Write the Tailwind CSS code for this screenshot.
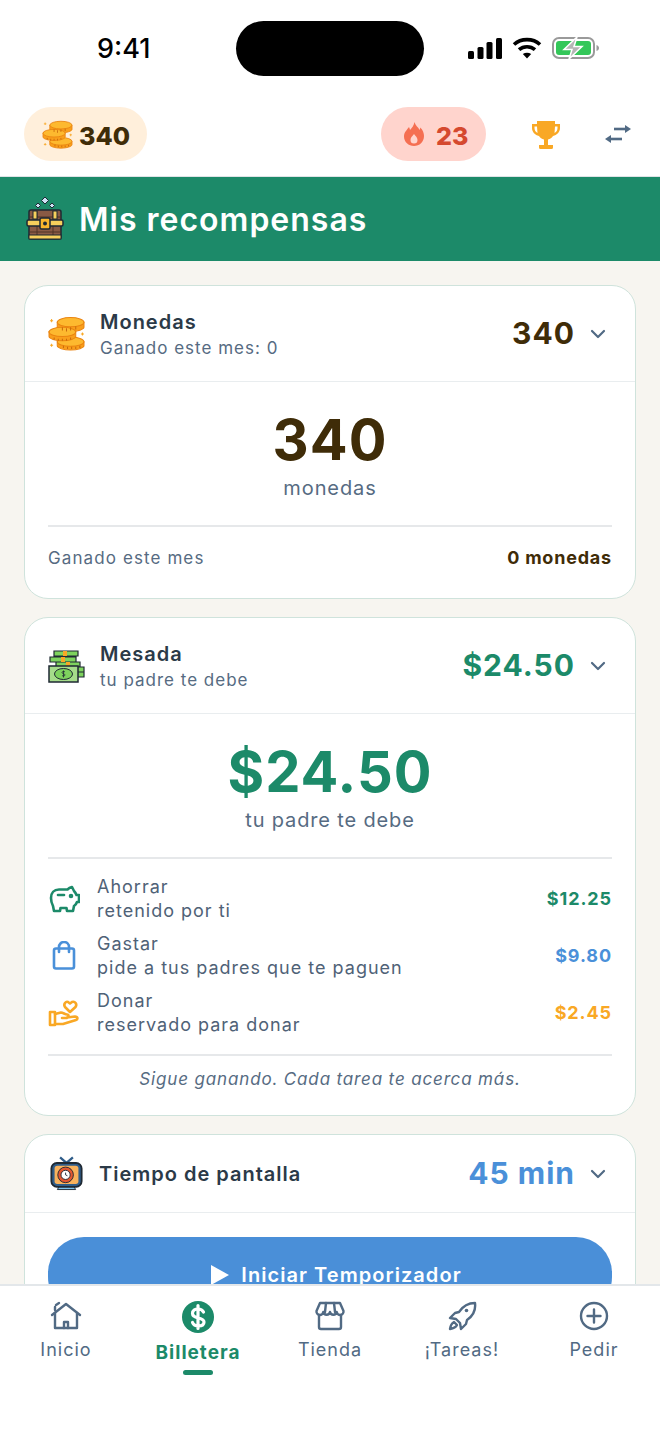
<!DOCTYPE html>
<html lang="es">
<head>
    <meta charset="UTF-8">
    <meta name="viewport" content="width=device-width, initial-scale=1.0">
    <title>Mis recompensas</title>
    <script src="https://cdn.jsdelivr.net/npm/@tailwindcss/browser@4"></script>
</head>
<body class="bg-white font-['Inter',sans-serif]">
    <svg class="hidden">
        <symbol id="coins" viewBox="0 0 36 34">
            <path d="M3 3h1v1h1v1H4v1H3V5H2V4h1zM33 16h1v1h1v1h-1v1h-1v-1h-1v-1h1zM3 27h1v1h1v1H4v1H3v-1H2v-1h1z" fill="#f9a825"/>
            <g stroke="#ea8410" stroke-width="1">
                <path d="M9 25v4c0 2 6 4 13 4s13-2 13-4v-4z" fill="#f99f1b"/>
                <ellipse cx="22" cy="25" rx="13" ry="4.500" fill="#fdb92f"/>
                <path d="M9 6v5c0 2 6 4 13 4s13-2 13-4V6z" fill="#f99f1b"/>
                <ellipse cx="22" cy="6" rx="13" ry="4.500" fill="#fdb92f"/>
                <path d="M1 15v5c0 2 6 4 13 4s13-2 13-4v-5z" fill="#f99f1b"/>
                <ellipse cx="14" cy="15.500" rx="13" ry="4.500" fill="#fdb92f"/>
            </g>
            <path d="M14 11v3M18 12v3M22 11v3M27 10v3M6 21v2M10 22v2M14 22v2M18 22v2M22 21v2M15 29v2M19 30v2M23 30v2M27 30v2M31 29v2" stroke="#c96a0c" stroke-width="1"/>
        </symbol>
    </svg>

    <div class="w-[660px] h-[1434px] flex flex-col overflow-hidden bg-[#f7f5f0]">
        <!-- status bar -->
        <div class="h-[96px] shrink-0 bg-white relative">
            <span class="absolute left-[97px] top-[34px] text-[27px] leading-[30px] font-medium text-black">9:41</span>
            <div class="absolute left-[236px] top-[21px] w-[188px] h-[55px] rounded-full bg-black"></div>
            <svg class="absolute left-[468px] top-[37px]" width="34" height="22" viewBox="0 0 34 22" fill="#000">
                <rect x="0" y="14" width="6" height="8" rx="1.500"/>
                <rect x="9.500" y="10" width="6" height="12" rx="1.500"/>
                <rect x="18.500" y="5" width="6" height="17" rx="1.500"/>
                <rect x="28" y="1" width="6" height="21" rx="1.500"/>
            </svg>
            <svg class="absolute left-[512px] top-[37px]" width="30" height="22" viewBox="0 0 30 22" fill="none" stroke="#000" stroke-width="3.600">
                <path d="M2 7.500c7-6.500 19-6.500 26 0"/>
                <path d="M7 12.700c4.500-4 11.500-4 16 0"/>
                <path d="M15 21.500l-4.200-4.600c2.400-1.600 6-1.600 8.400 0z" fill="#000" stroke="none"/>
            </svg>
            <svg class="absolute left-[552px] top-[36px]" width="48" height="24" viewBox="0 0 48 24">
                <rect x="1" y="2" width="41" height="20" rx="6" fill="none" stroke="#9a9a9a" stroke-width="2"/>
                <rect x="4" y="5" width="35" height="14" rx="3" fill="#34c759"/>
                <path d="M44.500 9c1.500.5 2.500 1.500 2.500 3s-1 2.500-2.500 3z" fill="#9a9a9a"/>
                <path d="M25 1L12 13.500h8L17 23l13-12.500h-8z" fill="#b5b5b5" stroke="#fff" stroke-width="1.500"/>
            </svg>
        </div>

        <!-- top bar -->
        <div class="h-[81px] shrink-0 bg-white border-b border-[#dfe3e6] flex items-start pt-[11px] pl-[24px]">
            <div class="h-[54px] w-[123px] rounded-full bg-[#ffefdb] flex items-center pl-[18px] gap-[6px]">
                <svg width="31" height="29"><use href="#coins"/></svg>
                <span class="mt-[6px] text-[25px] font-extrabold tracking-[0px] text-[#3f2c08]">340</span>
            </div>
            <div class="ml-[234px] h-[54px] w-[105px] rounded-full bg-[#ffd4cd] flex items-center pl-[22px] gap-[11px]">
                <svg width="22" height="26" viewBox="0 0 22 26">
                    <path d="M11.500 1c1 4 4 5 5 8 .5-1 .7-1.500.8-2.500C20 9 21 12.500 21 15c0 6-4.500 10-10 10S1 21 1 15.500C1 11 4 9 6 6c.5 1 .8 2 1 3 2-2 4-5 4.500-8z" fill="#f56f52"/>
                    <path d="M11 13c1.500 2 3.500 3.500 3.500 6a3.500 3.500 0 0 1-7 0c0-2.500 2-4 3.500-6z" fill="#ffd4cd"/>
                </svg>
                <span class="mt-[6px] text-[25px] font-extrabold tracking-[0px] text-[#d5492f]">23</span>
            </div>
            <svg class="ml-[45px] mt-[13px]" width="30" height="30" viewBox="0 0 30 30">
                <path d="M6 1h18v3h5v4c0 4-3 7-7 8-1 2-3 3-5 3.500V25h5v2.500a1.500 1.500 0 0 1-1.500 1.500h-11A1.500 1.500 0 0 1 8 27.500V25h5v-5.500c-2-.5-4-1.500-5-3.500-4-1-7-4-7-8V4h5z" fill="#f9a825"/>
                <path d="M6 6.500H3.500V8c0 2 1 4 3 5zM24 6.500h2.500V8c0 2-1 4-3 5z" fill="#fff"/>
            </svg>
            <svg class="ml-[44px] mt-[18px]" width="26" height="18" viewBox="0 0 26 18" fill="#516a84">
                <rect x="9" y="2.700" width="13" height="2.600"/>
                <path d="M20 0l6 4-6 4z"/>
                <rect x="4" y="12.700" width="13" height="2.600"/>
                <path d="M6 10l-6 4 6 4z"/>
            </svg>
        </div>

        <!-- title -->
        <div class="h-[84px] shrink-0 bg-[#1c8a69] flex items-center pl-[26px] gap-[15px]">
            <svg width="38" height="44" viewBox="0 0 38 44">
                <path d="M19 0l3.500 3.500L19 7l-3.500-3.500zM12 6l2.500 2.500L12 11 9.500 8.500zM26 6l2.500 2.500L26 11l-2.500-2.500z" fill="#cfe3f7" stroke="#1f2933"/>
                <rect x="3" y="13" width="32" height="29" rx="2" fill="#8a5a44" stroke="#1f2933" stroke-width="1.500"/>
                <path d="M3 20h32M3 35h32M11 13v29M27 13v29" stroke="#4f3327"/>
                <rect x="1" y="23" width="36" height="6" rx="1.500" fill="#f7cf5c" stroke="#1f2933" stroke-width="1.500"/>
                <rect x="3" y="38" width="32" height="4" fill="#f7cf5c" stroke="#1f2933"/>
                <rect x="7" y="14" width="4" height="8" fill="#f7cf5c" stroke="#1f2933"/>
                <rect x="27" y="14" width="4" height="8" fill="#f7cf5c" stroke="#1f2933"/>
                <rect x="14" y="21" width="10" height="11" rx="1.500" fill="#f9b52d" stroke="#1f2933" stroke-width="1.500"/>
                <circle cx="19" cy="26.500" r="2" fill="#1f2933"/>
            </svg>
            <h1 class="pt-[2px] text-[32px] font-semibold text-white tracking-[1px]">Mis recompensas</h1>
        </div>

        <!-- content -->
        <div class="flex-1 min-h-0 overflow-hidden px-[24px] pt-[24px] flex flex-col gap-[18px]">

            <section class="bg-white border border-[#cfe3dc] rounded-[24px] shrink-0">
                <div class="h-[96px] border-b border-[#e9edef] flex items-center pl-[23px] pr-[29px]">
                    <svg width="37" height="35" class="shrink-0"><use href="#coins"/></svg>
                    <div class="ml-[15px] flex-1 pt-[2px]">
                        <div class="text-[20px] leading-[26px] font-semibold text-[#2b3a48] tracking-[1px]">Monedas</div>
                        <div class="text-[17px] leading-[26px] text-[#566b82] tracking-[1px]">Ganado este mes: 0</div>
                    </div>
                    <span class="text-[30px] font-bold text-[#3f2c08] tracking-[1px]">340</span>
                    <svg class="ml-[15px]" width="16" height="10" viewBox="0 0 16 10" fill="none" stroke="#516a84" stroke-width="2.200" stroke-linecap="round" stroke-linejoin="round"><path d="M2 2l6 6 6-6"/></svg>
                </div>
                <div class="px-[23px] pt-[26px] pb-[28px]">
                    <div class="text-center text-[56px] leading-[64px] font-bold text-[#3f2c08] tracking-[1px]">340</div>
                    <div class="text-center text-[20px] leading-[32px] text-[#566b82] tracking-[0.9px]">monedas</div>
                    <div class="mt-[21px] border-t-2 border-[#e6e8ea] pt-[19px] flex justify-between items-center">
                        <span class="text-[17px] leading-[24px] text-[#566b82] tracking-[1.1px]">Ganado este mes</span>
                        <span class="text-[18px] leading-[24px] font-bold text-[#3f2c08] tracking-[0.8px]">0 monedas</span>
                    </div>
                </div>
            </section>

            <section class="bg-white border border-[#cfe3dc] rounded-[24px] shrink-0">
                <div class="h-[96px] border-b border-[#e9edef] flex items-center pl-[23px] pr-[29px]">
                    <svg width="37" height="34" viewBox="0 0 37 34" class="shrink-0">
                        <path d="M6 2h24v5H6zM2 8h26v5H2zM8 13h24v5H8z" fill="#7ed35e" stroke="#1f2933" stroke-width="1.200"/>
                        <path d="M15 2h4v5h-4zM13 8h4v5h-4zM18 13h4v5h-4z" fill="#f9a825"/>
                        <path d="M28 18h8v5h-8zM28 23h8v5h-8z" fill="#7ed35e" stroke="#1f2933" stroke-width="1.200"/>
                        <rect x="1" y="17" width="29" height="16" fill="#a5dc8a" stroke="#1f2933" stroke-width="1.500"/>
                        <ellipse cx="15.500" cy="25" rx="9" ry="5.500" fill="#7ed35e" stroke="#1f2933"/>
                        <path d="M15.500 21.500v7M17 23c-1-1-3-.7-3 .6s3 1 3 2.300-2 1.500-3 .6" stroke="#1f2933" fill="none" stroke-width=".8"/>
                    </svg>
                    <div class="ml-[15px] flex-1 pt-[2px]">
                        <div class="text-[20px] leading-[26px] font-semibold text-[#2b3a48] tracking-[1px]">Mesada</div>
                        <div class="text-[17px] leading-[26px] text-[#566b82] tracking-[1px]">tu padre te debe</div>
                    </div>
                    <span class="text-[30px] font-bold text-[#1c8a69] tracking-[1px]">$24.50</span>
                    <svg class="ml-[15px]" width="16" height="10" viewBox="0 0 16 10" fill="none" stroke="#516a84" stroke-width="2.200" stroke-linecap="round" stroke-linejoin="round"><path d="M2 2l6 6 6-6"/></svg>
                </div>
                <div class="px-[23px] pt-[26px] pb-[24px]">
                    <div class="text-center text-[56px] leading-[64px] font-bold text-[#1c8a69] tracking-[1px]">$24.50</div>
                    <div class="text-center text-[20px] leading-[32px] text-[#566b82] tracking-[0.85px]">tu padre te debe</div>
                    <div class="mt-[21px] border-t-2 border-[#e6e8ea] pt-[16px] flex flex-col gap-[9px]">
                        <div class="flex items-center h-[48px]">
                            <svg width="32" height="30" viewBox="0 0 32 30" fill="none" stroke="#1c8a69" stroke-width="2.600" stroke-linejoin="round" stroke-linecap="round" class="shrink-0">
                                <path d="M24 3c-2 .5-3.500 1.500-4.500 2.500H11C6 5.500 3 9 3 14c0 3 1 6 2 8l1 5h6l.5-3h6l.5 3h6l1-5c1.500-1 2.500-2.500 3-4h2v-7h-2.500c-.5-1.500-1.500-3-2.500-4z"/>
                                <path d="M10 11h6"/>
                                <circle cx="23" cy="12" r="1" fill="#1c8a69"/>
                            </svg>
                            <div class="ml-[17px] flex-1 text-[18px] leading-[24px] text-[#4f6277] tracking-[1px]">
                                <div>Ahorrar</div>
                                <div>retenido por ti</div>
                            </div>
                            <span class="mb-[2px] text-[18px] font-bold text-[#1c8a69] tracking-[0.9px]">$12.25</span>
                        </div>
                        <div class="flex items-center h-[48px]">
                            <svg width="32" height="30" viewBox="0 0 32 30" fill="none" stroke="#4a90d9" stroke-width="2.600" stroke-linejoin="round" stroke-linecap="round" class="shrink-0">
                                <rect x="6" y="7.500" width="20" height="20" rx="2"/>
                                <path d="M11 11V6a5 5 0 0 1 10 0v5"/>
                            </svg>
                            <div class="ml-[17px] flex-1 text-[18px] leading-[24px] text-[#4f6277] tracking-[1px]">
                                <div>Gastar</div>
                                <div>pide a tus padres que te paguen</div>
                            </div>
                            <span class="mb-[2px] text-[18px] font-bold text-[#4a90d9] tracking-[0.9px]">$9.80</span>
                        </div>
                        <div class="flex items-center h-[48px]">
                            <svg width="32" height="30" viewBox="0 0 32 30" fill="none" stroke="#f9a825" stroke-width="2.600" stroke-linejoin="round" stroke-linecap="round" class="shrink-0">
                                <path d="M22 14l-5-5c-2-3 1-6 3-5l2 1.500L24 4c3-1 5.500 2 3.500 5z"/>
                                <path d="M2 14h5v13H2z"/>
                                <path d="M7 16l6-1.500c2 0 4 2 6 2 2 0 2 3 0 3.500h-5m5-.5l8-1c3 0 3 3 1 3.500L15 26H7"/>
                            </svg>
                            <div class="ml-[17px] flex-1 text-[18px] leading-[24px] text-[#4f6277] tracking-[1px]">
                                <div>Donar</div>
                                <div>reservado para donar</div>
                            </div>
                            <span class="mb-[2px] text-[18px] font-bold text-[#f9a825] tracking-[0.9px]">$2.45</span>
                        </div>
                    </div>
                    <div class="mt-[17px] border-t-2 border-[#e6e8ea] pt-[11px] text-center text-[17px] leading-[24px] italic text-[#566b82] tracking-[0.85px]">Sigue ganando. Cada tarea te acerca más.</div>
                </div>
            </section>

            <section class="bg-white border border-[#cfe3dc] rounded-[24px] shrink-0">
                <div class="h-[78px] border-b border-[#e9edef] flex items-center pl-[25px] pr-[29px]">
                    <svg width="33" height="37" viewBox="0 0 36 37" class="shrink-0">
                        <path d="M11 1l7 6 7-6" fill="none" stroke="#2f5d8a" stroke-width="2.500"/>
                        <path d="M11 31h14l3 5H8z" fill="#7cc4ef" stroke="#1f2933"/>
                        <rect x="1.500" y="7" width="33" height="26" rx="6" fill="#2f5d8a" stroke="#1f2933" stroke-width="2"/>
                        <rect x="5" y="10" width="26" height="20" rx="3" fill="#f9b25c"/>
                        <circle cx="17" cy="20" r="8.500" fill="#e2562f" stroke="#1f2933"/>
                        <circle cx="17" cy="20" r="5" fill="#fff" stroke="#1f2933"/>
                        <path d="M17 17.500V20l2 1" stroke="#1f2933" fill="none"/>
                    </svg>
                    <div class="ml-[16px] flex-1 text-[20px] leading-[26px] font-semibold text-[#2b3a48] tracking-[1px]">Tiempo de pantalla</div>
                    <span class="text-[30px] font-bold text-[#4a90d9] tracking-[1px]">45 min</span>
                    <svg class="ml-[15px]" width="16" height="10" viewBox="0 0 16 10" fill="none" stroke="#516a84" stroke-width="2.200" stroke-linecap="round" stroke-linejoin="round"><path d="M2 2l6 6 6-6"/></svg>
                </div>
                <div class="px-[23px] pt-[24px]">
                    <button class="w-full h-[76px] rounded-[36px] bg-[#4a8fd8] flex items-center justify-center gap-[12px] pl-[12px] text-white text-[20px] font-semibold tracking-[1.05px]">
                        <svg width="19" height="20" viewBox="0 0 19 20" fill="#fff"><path d="M1 0l18 10L1 20z"/></svg>
                        Iniciar Temporizador
                    </button>
                </div>
            </section>
        </div>

        <!-- bottom nav -->
        <nav class="h-[150px] shrink-0 bg-white border-t-2 border-[#e3e7ea] flex justify-between text-[#516a84]">
            <a class="w-[132px] flex flex-col items-center pt-[15px]">
                <svg width="32" height="30" viewBox="0 0 32 30" fill="none" stroke="#516a84" stroke-width="2.400" stroke-linejoin="round" stroke-linecap="round">
                    <path d="M2 14L16 3l14 11"/>
                    <path d="M5 12v15h22V12"/>
                    <path d="M14 27v-6h4v6"/>
                    <path d="M6 4l3-2M5 9V6"/>
                </svg>
                <span class="mt-[7px] text-[18px] leading-[24px] tracking-[1px]">Inicio</span>
            </a>
            <a class="w-[132px] flex flex-col items-center pt-[15px]">
                <svg width="32" height="32" viewBox="0 0 32 32">
                    <circle cx="16" cy="16" r="16" fill="#1c8a69"/>
                    <path d="M21.500 11c-1-2-3-3-5.500-3-3 0-5.500 1.500-5.500 4.500 0 6 11.500 3 11.500 8.500 0 3-2.500 4-5.500 4-3 0-5-1-6-3.500M16 4.500v23" fill="none" stroke="#fff" stroke-width="3.200" stroke-linecap="round"/>
                </svg>
                <span class="mt-[8px] text-[19px] leading-[24px] font-bold text-[#1c8a69] tracking-[1px]">Billetera</span>
                <span class="mt-[5px] w-[30px] h-[5px] rounded-full bg-[#1c8a69]"></span>
            </a>
            <a class="w-[132px] flex flex-col items-center pt-[15px]">
                <svg width="30" height="30" viewBox="0 0 30 30" fill="none" stroke="#516a84" stroke-width="2.400" stroke-linejoin="round" stroke-linecap="round">
                    <path d="M5 2h20l3.500 8a3.400 3.400 0 0 1-6.800 1 3.400 3.400 0 0 1-6.700 0 3.400 3.400 0 0 1-6.700 0 3.400 3.400 0 0 1-6.800-1z"/>
                    <path d="M4 14v12a2 2 0 0 0 2 2h18a2 2 0 0 0 2-2V14"/>
                    <path d="M11 2l-1 9M19 2l1 9"/>
                </svg>
                <span class="mt-[7px] text-[18px] leading-[24px] tracking-[1px]">Tienda</span>
            </a>
            <a class="w-[132px] flex flex-col items-center pt-[15px]">
                <svg width="30" height="30" viewBox="0 0 30 30" fill="none" stroke="#516a84" stroke-width="2.400" stroke-linejoin="round">
                    <path d="M28 2c-7 0-12 3-16 9l-4 1-5 5 6 1 4 4 1 6 5-5 1-4c6-4 9-9 8-17z"/>
                    <circle cx="19.500" cy="9.500" r="1.800" fill="#516a84" stroke="none"/>
                    <path d="M7 21c-2 1-3.500 3.500-4 7 3-.5 6-2 7-4z"/>
                </svg>
                <span class="mt-[7px] text-[18px] leading-[24px] tracking-[1px]">¡Tareas!</span>
            </a>
            <a class="w-[132px] flex flex-col items-center pt-[15px]">
                <svg width="30" height="30" viewBox="0 0 30 30" fill="none" stroke="#516a84" stroke-width="2.400" stroke-linecap="round">
                    <circle cx="15" cy="15" r="13"/>
                    <path d="M15 8.500v13M8.500 15h13"/>
                </svg>
                <span class="mt-[7px] text-[18px] leading-[24px] tracking-[1px]">Pedir</span>
            </a>
        </nav>
    </div>
</body>
</html>
